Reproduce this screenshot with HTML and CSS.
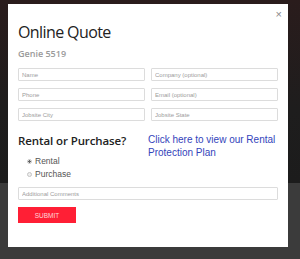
FILE: index.html
```html
<!DOCTYPE html>
<html lang="en">
<head>
    <meta charset="UTF-8">
    <meta name="viewport" content="width=device-width, initial-scale=1.0">
    <title>Online Quote</title>
    <link rel="stylesheet" href="styles.css">
</head>
<body>
    <div class="page">
        <div class="hero"></div>
        <div class="rest"></div>
    </div>

    <div class="overlay">
        <div class="modal">
            <span class="close">&times;</span>
            <h1>Online Quote</h1>
            <p class="product">Genie 5519</p>

            <form class="quote-form">
                <div class="fields">
                    <input type="text" placeholder="Name">
                    <input type="text" placeholder="Company (optional)">
                    <input type="text" placeholder="Phone">
                    <input type="text" placeholder="Email (optional)">
                    <input type="text" placeholder="Jobsite City">
                    <input type="text" placeholder="Jobsite State">
                </div>

                <div class="choice">
                    <div>
                        <h2>Rental or Purchase?</h2>
                        <label class="radio"><input type="radio" name="type" checked> Rental</label>
                        <label class="radio"><input type="radio" name="type"> Purchase</label>
                    </div>
                    <a class="plan-link" href="#">Click here to view our Rental Protection Plan</a>
                </div>

                <input class="comments" type="text" placeholder="Additional Comments">
                <button type="button" class="submit">SUBMIT</button>
            </form>
        </div>
    </div>
</body>
</html>
```

FILE: styles.css
```css
* { margin: 0; padding: 0; box-sizing: border-box; }
body {
    font-family: 'Liberation Sans', Arial, sans-serif;
    background: #3b3b3b;
    width: 300px;
    height: 259px;
    overflow: hidden;
}
.page {
    height: 259px;
}
.hero {
    height: 183px;
    background: linear-gradient(180deg, #2a1c1c 0%, #1e1d1d 60%, #1c1c1c 100%);
}
.rest {
    height: 76px;
    background: #3b3b3b;
}
.overlay {
    position: absolute;
    top: 0;
    left: 0;
    width: 300px;
    height: 259px;
}
.modal {
    position: absolute;
    top: 4px;
    left: 8px;
    width: 280px;
    height: 243px;
    background: #fff;
    padding: 17px 10px 0;
}
.close {
    position: absolute;
    top: 4px;
    right: 6px;
    font-size: 11px;
    color: #8a8a8a;
}
h1 {
    font-family: 'Open Sans', sans-serif;
    font-size: 16px;
    font-weight: 400;
    letter-spacing: -0.6px;
    line-height: 22px;
    color: #222;
}
.product {
    font-family: 'Open Sans', sans-serif;
    font-size: 9px;
    font-weight: 600;
    color: #9a9a9a;
    margin-top: 5px;
    line-height: 12px;
}
.fields {
    display: grid;
    grid-template-columns: 1fr 1fr;
    gap: 7px 6px;
    margin-top: 8px;
}
input[type="text"] {
    display: block;
    width: 100%;
    height: 13px;
    border: 1px solid #dcdcdc;
    border-radius: 1px;
    padding: 0 3px;
    font-family: 'Liberation Sans', Arial, sans-serif;
    font-size: 6px;
    color: #555;
}
input::placeholder {
    color: #9c9c9c;
}
.choice {
    display: grid;
    grid-template-columns: 130px 1fr;
    margin-top: 12px;
}
h2 {
    font-family: 'Open Sans', sans-serif;
    font-size: 11.5px;
    font-weight: 600;
    letter-spacing: -0.1px;
    line-height: 16px;
    color: #222;
}
.radio {
    display: flex;
    align-items: center;
    gap: 3px;
    margin-left: 9px;
    font-size: 8.5px;
    color: #555;
    line-height: 13px;
}
.radio:first-of-type {
    margin-top: 6px;
}
.radio input {
    appearance: none;
    width: 5px;
    height: 5px;
    margin: 0;
    border: 1px solid #c4c4c4;
    border-radius: 50%;
    background: #eee;
}
.radio input:checked {
    background: radial-gradient(circle, #666 0 1px, #eee 1.3px);
}
.plan-link {
    font-size: 10px;
    line-height: 12.5px;
    color: #3344bb;
    text-decoration: none;
    margin-top: 1px;
}
.comments {
    margin-top: 6px;
}
.submit {
    display: block;
    margin-top: 7px;
    width: 58px;
    height: 16px;
    border: none;
    background: #ff1f35;
    color: #ffd6da;
    font-family: 'Liberation Sans', Arial, sans-serif;
    font-size: 6.5px;
}
```
